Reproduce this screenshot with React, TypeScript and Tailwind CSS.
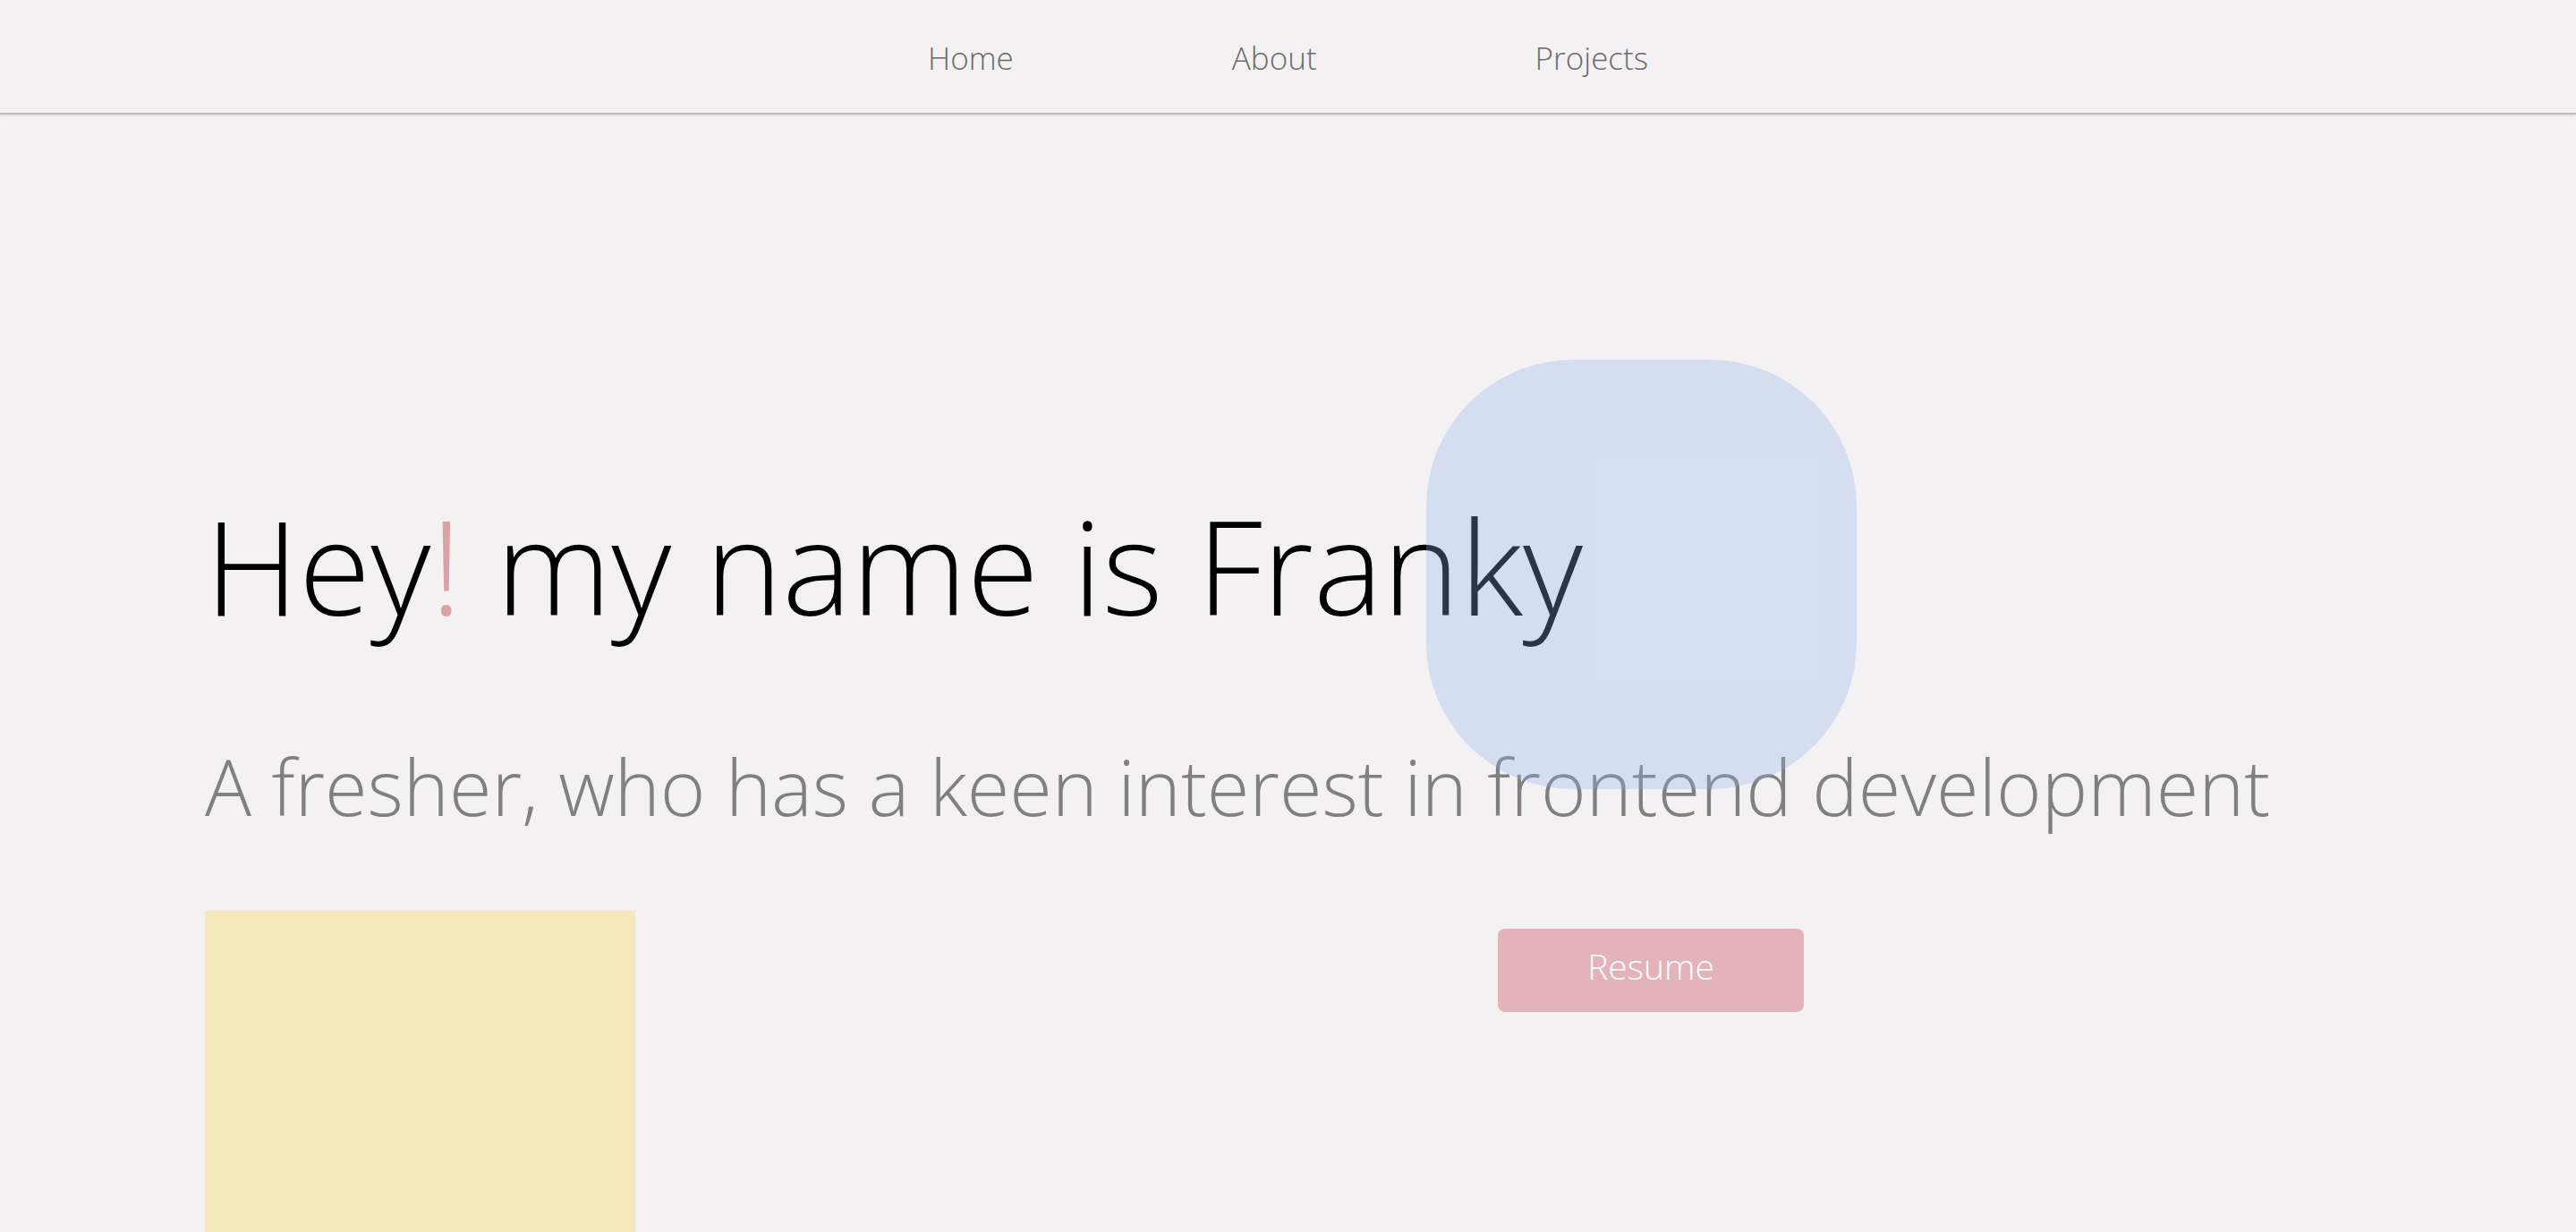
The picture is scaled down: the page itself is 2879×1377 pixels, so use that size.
import React from "react";

export default function App() {
  const font = { fontFamily: '"Open Sans", "Liberation Sans", sans-serif' };
  return (
    <div className="min-h-screen w-full bg-[#f3f1f2] font-light" style={font}>
      <nav className="h-[128px] w-full flex items-center justify-center gap-[244px] pt-[3px] border-b-2 border-[#bdbcbd] shadow-[0_1px_3px_rgba(0,0,0,0.12)]">
        <a className="text-[35px] leading-none text-[#6b6b6b] cursor-pointer">Home</a>
        <a className="text-[35px] leading-none text-[#6b6b6b] cursor-pointer">About</a>
        <a className="text-[35px] leading-none text-[#6b6b6b] cursor-pointer">Projects</a>
      </nav>
      <main className="relative pl-[229px] pt-[431px]">
        <h1 className="text-[146px] leading-none text-black font-light whitespace-nowrap">
          Hey<span className="text-[#dca1a1]">!</span> my name is Franky
        </h1>
        <p className="mt-[131px] text-[86.5px] leading-none text-[#808080] font-light whitespace-nowrap">
          A fresher, who has a keen interest in frontend development
        </p>
        <div className="mt-[95px] flex items-start">
          <div className="w-[481px] h-[480px] bg-[#f5e9bc]" />
          <button className="ml-[964px] mt-[20px] w-[342px] h-[93px] rounded-lg bg-[#e4b3ba] text-white text-[39px] leading-none font-light flex items-center justify-center pb-[9px]">
            Resume
          </button>
        </div>
        <div className="absolute left-[1594px] top-[274px] w-[481px] h-[480px] rounded-[164px] bg-[rgba(147,177,240,0.3)] pointer-events-none" />
      </main>
    </div>
  );
}
